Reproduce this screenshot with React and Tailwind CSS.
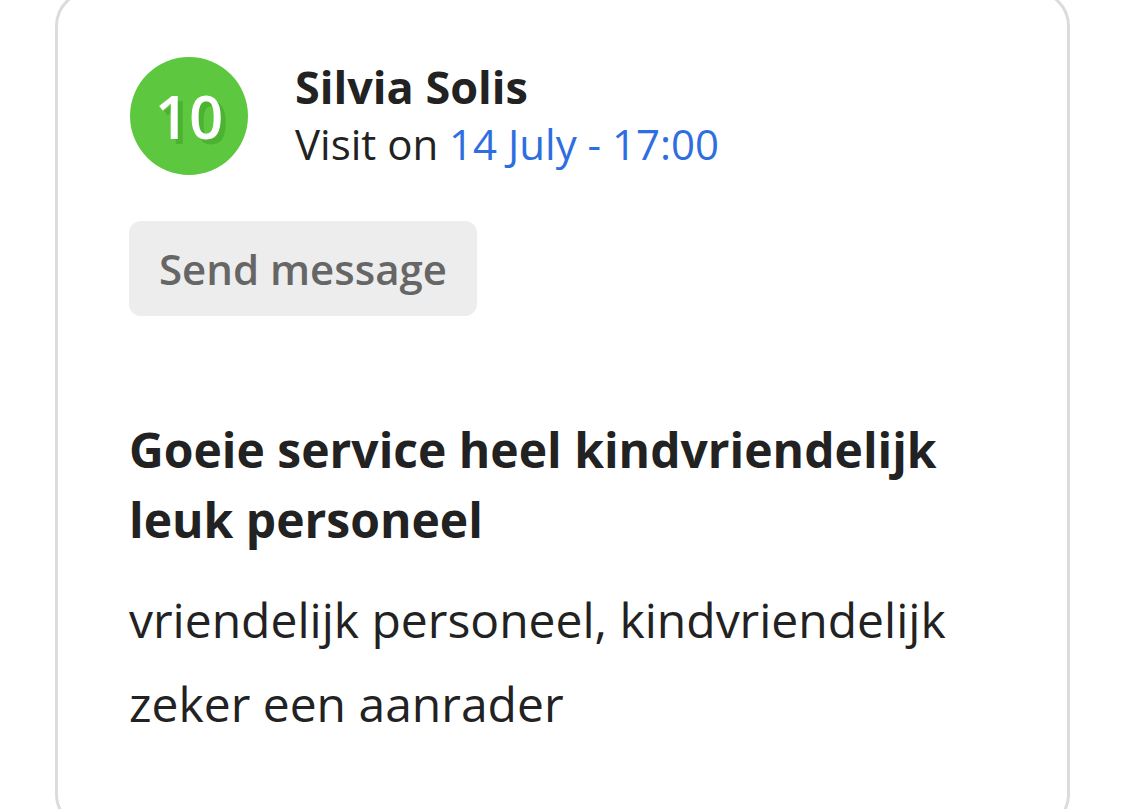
export default function App() {
  return (
    <div className="w-[1125px] h-[809px] overflow-hidden bg-white font-['Open_Sans',sans-serif]">
      <div className="mx-[55px] mt-[-10px] h-[840px] rounded-[36px] border-[3px] border-[#dcdcdc] px-[71px] pt-[64px]">
        <div className="flex items-center gap-[47px]">
          <div className="ml-px flex h-[118px] w-[118px] shrink-0 items-center justify-center rounded-full bg-[#5dc83f] text-[60px] font-semibold text-white [text-shadow:5px_5px_0_#4cb232]">
            10
          </div>
          <div className="flex flex-col">
            <div className="text-[45px] font-bold leading-[56px] text-[#222]">Silvia Solis</div>
            <div className="text-[42px] leading-[58px] text-[#222]">
              Visit on <span className="text-[#2f6ee0]">14 July - 17:00</span>
            </div>
          </div>
        </div>
        <button className="mt-[46px] rounded-[12px] bg-[#ededed] px-[30px] py-[18px] text-[42px] font-semibold leading-[59px] text-[#666]">
          Send message
        </button>
        <h2 className="mt-[99px] text-[48px] font-bold leading-[70px] text-[#222]">
          Goeie service heel kindvriendelijk
          <br />
          leuk personeel
        </h2>
        <p className="mt-[23px] text-[48px] leading-[84px] text-[#222]">
          vriendelijk personeel, kindvriendelijk
          <br />
          zeker een aanrader
        </p>
      </div>
    </div>
  );
}
